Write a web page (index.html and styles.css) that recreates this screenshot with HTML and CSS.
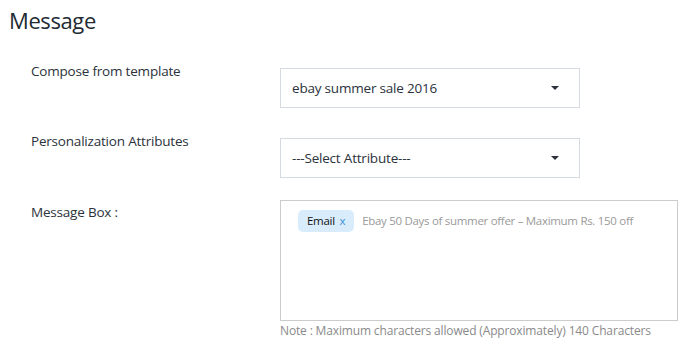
FILE: index.html
```html
<!DOCTYPE html>
<html lang="en">
<head>
  <meta charset="UTF-8">
  <meta name="viewport" content="width=device-width, initial-scale=1.0">
  <title>Message</title>
  <link rel="stylesheet" href="styles.css">
</head>
<body>
  <h1>Message</h1>

  <div class="form">
    <div class="row row-template">
      <label class="label">Compose from template</label>
      <div class="select">
        <span>ebay summer sale 2016</span>
        <span class="caret"></span>
      </div>
    </div>

    <div class="row row-attr">
      <label class="label">Personalization Attributes</label>
      <div class="select">
        <span>---Select Attribute---</span>
        <span class="caret"></span>
      </div>
    </div>

    <div class="row row-box">
      <label class="label">Message Box :</label>
      <div class="box-wrap">
        <div class="message-box">
          <span class="chip">Email <span class="chip-x">x</span></span>
          <span class="message-text">Ebay 50 Days of summer offer &ndash; Maximum Rs. 150 off</span>
        </div>
        <p class="note">Note : Maximum characters allowed (Approximately) 140 Characters</p>
      </div>
    </div>
  </div>
</body>
</html>
```

FILE: styles.css
```css
body {
  font-family: "Open Sans", "Noto Sans", Arial, sans-serif;
  color: #333;
  background-color: #fff;
  margin: 0;
  padding: 0;
}

h1 {
  font-size: 22px;
  font-weight: 500;
  color: #222a33;
  margin: 0;
  padding: 4px 0 0 9px;
  line-height: 32px;
  letter-spacing: -0.4px;
}

.form {
  padding-left: 31px;
}

.row {
  display: flex;
  align-items: flex-start;
}

.label {
  width: 249px;
  font-size: 13.5px;
  line-height: 20px;
  color: #2b323b;
  letter-spacing: -0.2px;
}

.row-template {
  margin-top: 25px;
}

.row-attr {
  margin-top: 23px;
}

.row-box {
  margin-top: 22px;
}

.row-box .label {
  padding-top: 2px;
}

.select {
  width: 267px;
  height: 38px;
  margin-top: 7px;
  border: 1px solid #d5dbe1;
  display: flex;
  align-items: center;
  justify-content: space-between;
  padding: 0 20px 0 11px;
  font-size: 13.5px;
  color: #2b323b;
  letter-spacing: -0.2px;
}

.caret {
  width: 0;
  height: 0;
  border-left: 4.5px solid transparent;
  border-right: 4.5px solid transparent;
  border-top: 4px solid #2b323b;
}

.message-box {
  width: 398px;
  height: 121px;
  border: 1px solid #ccc;
  padding: 9px 0 0 17px;
  box-sizing: border-box;
  display: flex;
  align-items: flex-start;
}

.chip {
  background-color: #d9ecfc;
  border-radius: 5px;
  font-size: 11.5px;
  line-height: 22px;
  padding: 0 9px;
  color: #111;
  letter-spacing: -0.3px;
}

.chip-x {
  color: #3a8fd9;
  margin-left: 2px;
}

.message-text {
  font-size: 11.5px;
  line-height: 22px;
  color: #9a9a9a;
  margin-left: 8px;
  letter-spacing: -0.3px;
}

.note {
  margin: 1px 0 0;
  font-size: 12px;
  line-height: 18px;
  color: #8a8a8a;
  letter-spacing: -0.15px;
}
```
